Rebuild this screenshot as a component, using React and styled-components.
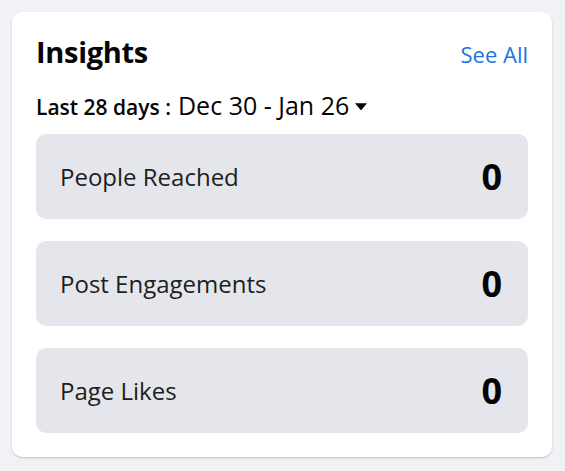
import styled, { createGlobalStyle } from "styled-components";

const GlobalStyle = createGlobalStyle`
  html, body {
    margin: 0;
    padding: 0;
    background: #f0f2f5;
  }
  body {
    font-family: "Open Sans", "Noto Sans", sans-serif;
    color: #050505;
  }
`;

const Page = styled.div`
  width: 565px;
  height: 471px;
  padding: 12px 13px 14px 12px;
  box-sizing: border-box;
`;

const Card = styled.div`
  background: #fff;
  border-radius: 10px;
  box-shadow: 0 1px 2px rgba(0, 0, 0, 0.2);
  padding: 23px 24px 24px 24px;
  height: 100%;
  box-sizing: border-box;
  display: flex;
  flex-direction: column;
`;

const Header = styled.div`
  display: flex;
  justify-content: space-between;
  align-items: baseline;
  height: 34px;
  line-height: 34px;
`;

const Title = styled.h2`
  margin: 0;
  font-size: 29px;
  font-weight: 700;
  letter-spacing: -0.3px;
`;

const SeeAll = styled.a`
  color: #1b74e4;
  font-size: 22px;
  text-decoration: none;
  cursor: pointer;
`;

const Range = styled.div`
  display: flex;
  align-items: baseline;
  margin-top: 22px;
  margin-bottom: 15px;
  height: 28px;
  line-height: 28px;
  font-size: 25px;
  white-space: nowrap;
`;

const RangeLabel = styled.span`
  font-size: 21px;
  font-weight: 600;
  margin-right: 7px;
`;

const Caret = styled.svg`
  width: 14px;
  height: 9px;
  margin-left: 5px;
  align-self: center;
  margin-top: 3px;
`;

const List = styled.div`
  display: flex;
  flex-direction: column;
  gap: 22px;
`;

const Row = styled.div`
  display: flex;
  justify-content: space-between;
  align-items: center;
  height: 85px;
  padding: 0 26px 0 24px;
  background: #e4e6eb;
  border-radius: 10px;
`;

const Label = styled.span`
  font-size: 24px;
  color: #1c1e21;
`;

const Value = styled.span`
  font-size: 36px;
  font-weight: 700;
`;

const stats = [
  { label: "People Reached", value: 0 },
  { label: "Post Engagements", value: 0 },
  { label: "Page Likes", value: 0 },
];

const App = () => {
  return (
    <>
      <GlobalStyle />
      <Page>
        <Card>
          <Header>
            <Title>Insights</Title>
            <SeeAll>See All</SeeAll>
          </Header>
          <Range>
            <RangeLabel>Last 28 days :</RangeLabel>
            Dec 30 - Jan 26
            <Caret viewBox="0 0 14 9">
              <path d="M1 1.2 L13 1.2 L7.6 7.8 Q7 8.4 6.4 7.8 Z" fill="#050505" />
            </Caret>
          </Range>
          <List>
            {stats.map((s) => (
              <Row key={s.label}>
                <Label>{s.label}</Label>
                <Value>{s.value}</Value>
              </Row>
            ))}
          </List>
        </Card>
      </Page>
    </>
  );
};

export default App;
